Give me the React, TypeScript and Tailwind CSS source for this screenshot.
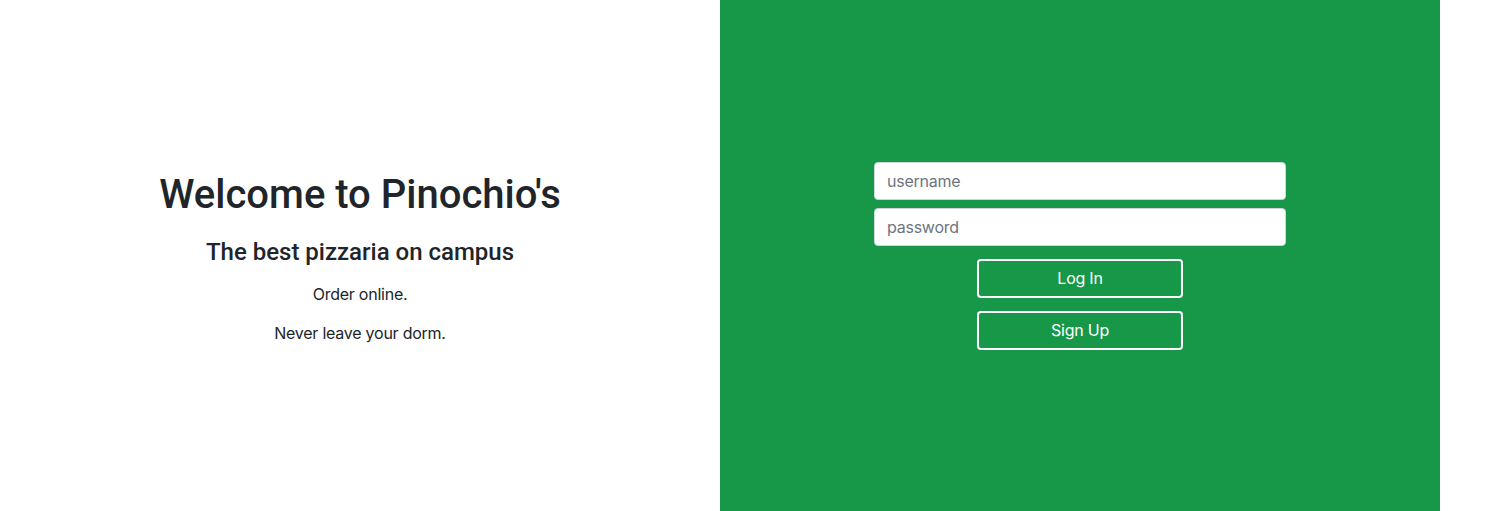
import React from "react";

export default function App() {
  return (
    <div
      className="flex h-[511px] w-[1512px] bg-white text-[#212529]"
      style={{ fontFamily: "Inter, 'Liberation Sans', sans-serif" }}
    >
      <div className="flex w-[720px] flex-col items-center justify-center pt-[5px] text-center">
        <h1
          className="text-[40px] font-medium leading-[48px]"
          style={{ fontFamily: "Roboto, 'Liberation Sans', sans-serif" }}
        >
          Welcome to Pinochio's
        </h1>
        <h4
          className="mt-[19px] text-[24px] font-medium leading-[29px]"
          style={{ fontFamily: "Roboto, 'Liberation Sans', sans-serif" }}
        >
          The best pizzaria on campus
        </h4>
        <p className="mt-[15px] text-base leading-6 tracking-[-0.015em]">Order online.</p>
        <p className="mt-[15px] text-base leading-6 tracking-[-0.015em]">Never leave your dorm.</p>
      </div>
      <div className="flex w-[720px] flex-col items-center justify-center bg-[#179848]">
        <div className="flex w-[412px] flex-col items-center">
          <input
            type="text"
            placeholder="username"
            className="h-[38px] w-full rounded-[4px] border border-[#ced4da] bg-white px-3 text-base tracking-[-0.015em] text-[#212529] placeholder:text-[#6c757d] outline-none"
          />
          <input
            type="password"
            placeholder="password"
            className="mt-2 h-[38px] w-full rounded-[4px] border border-[#ced4da] bg-white px-3 text-base tracking-[-0.015em] text-[#212529] placeholder:text-[#6c757d] outline-none"
          />
          <button className="mt-[13px] h-[39px] w-[206px] rounded-[4px] border-2 border-white text-base font-normal tracking-[-0.015em] text-white">
            Log In
          </button>
          <button className="mt-[13px] h-[39px] w-[206px] rounded-[4px] border-2 border-white text-base font-normal tracking-[-0.015em] text-white">
            Sign Up
          </button>
        </div>
      </div>
      <div className="flex-1 bg-white" />
    </div>
  );
}
